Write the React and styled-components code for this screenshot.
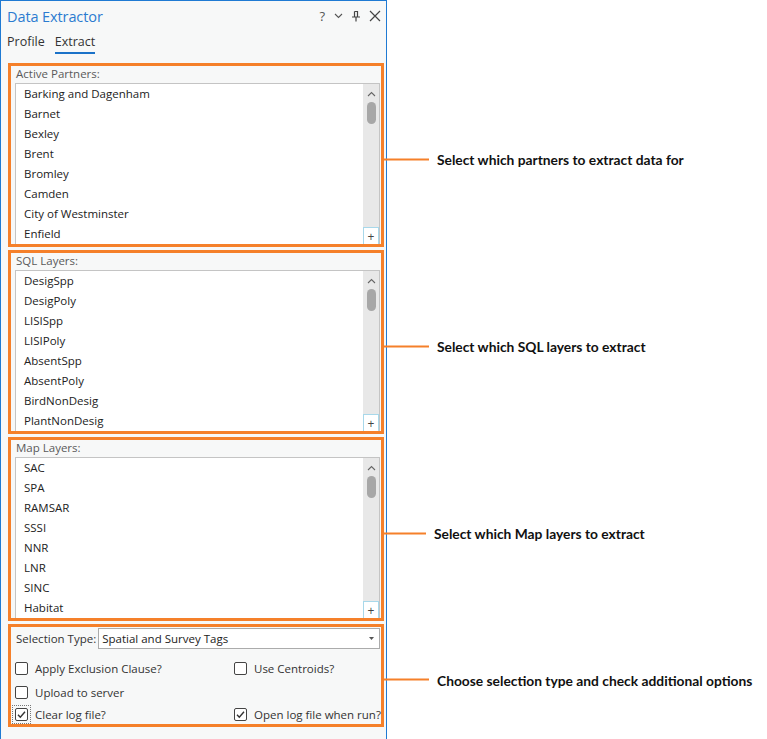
import React from "react";
import styled, { createGlobalStyle } from "styled-components";

const GlobalStyle = createGlobalStyle`
  html, body {
    margin: 0;
    padding: 0;
    background: #fff;
  }
  body {
    font-family: "Open Sans", "Noto Sans", sans-serif;
    color: #222;
  }
`;

const partners = [
  "Barking and Dagenham",
  "Barnet",
  "Bexley",
  "Brent",
  "Bromley",
  "Camden",
  "City of Westminster",
  "Enfield",
];

const sqlLayers = [
  "DesigSpp",
  "DesigPoly",
  "LISISpp",
  "LISIPoly",
  "AbsentSpp",
  "AbsentPoly",
  "BirdNonDesig",
  "PlantNonDesig",
];

const mapLayers = ["SAC", "SPA", "RAMSAR", "SSSI", "NNR", "LNR", "SINC", "Habitat"];

const ListBox = ({ items }) => (
  <List>
    <Items>
      {items.map((item) => (
        <Item key={item}>{item}</Item>
      ))}
    </Items>
    <Track>
      <svg width="9" height="6" viewBox="0 0 9 6" style={{ marginTop: 7 }}>
        <path d="M1 5 L4.5 1.5 L8 5" fill="none" stroke="#666" strokeWidth="1.1" />
      </svg>
      <Thumb />
      <Corner>+</Corner>
    </Track>
  </List>
);

const Check = ({ checked, focused, label }) => (
  <CheckRow>
    <Focus focused={focused}>
      <Box>
        {checked && (
          <svg width="11" height="11" viewBox="0 0 11 11">
            <path d="M2 5.8 L4.3 8.2 L9 2.8" fill="none" stroke="#333" strokeWidth="1.4" />
          </svg>
        )}
      </Box>
    </Focus>
    <span>{label}</span>
  </CheckRow>
);

const App = () => {
  return (
    <>
      <GlobalStyle />
      <Page>
        <Panel>
          <TitleBar>
            <Title>Data Extractor</Title>
            <Tools>
              <Help>?</Help>
              <svg width="9" height="6" viewBox="0 0 9 6">
                <path d="M1 1 L4.5 4.5 L8 1" fill="none" stroke="#555" strokeWidth="1.1" />
              </svg>
              <svg width="10" height="11" viewBox="0 0 10 11">
                <path d="M3.5 0.5 H6.5 V6 M3.5 0.5 V6 M1 6 H9 M5 6 V10.5" fill="none" stroke="#444" strokeWidth="1.2" />
              </svg>
              <svg width="12" height="12" viewBox="0 0 12 12">
                <path d="M1 1 L11 11 M11 1 L1 11" fill="none" stroke="#444" strokeWidth="1.2" />
              </svg>
            </Tools>
          </TitleBar>
          <Tabs>
            <Tab>Profile</Tab>
            <Tab active>Extract</Tab>
          </Tabs>

          <Sections>
            <Section>
              <Label>Active Partners:</Label>
              <ListBox items={partners} />
              <Note>
                <Line />
                <NoteText>Select which partners to extract data for</NoteText>
              </Note>
            </Section>

            <Section>
              <Label>SQL Layers:</Label>
              <ListBox items={sqlLayers} />
              <Note>
                <Line />
                <NoteText>Select which SQL layers to extract</NoteText>
              </Note>
            </Section>

            <Section>
              <Label>Map Layers:</Label>
              <ListBox items={mapLayers} />
              <Note>
                <Line width={45} />
                <NoteText>Select which Map layers to extract</NoteText>
              </Note>
            </Section>

            <Section options>
              <SelectRow>
                <span>Selection Type:</span>
                <Combo>
                  <span>Spatial and Survey Tags</span>
                  <svg width="5" height="3" viewBox="0 0 5 3">
                    <path d="M0 0 H5 L2.5 3 Z" fill="#555" />
                  </svg>
                </Combo>
              </SelectRow>
              <Options>
                <Check label="Apply Exclusion Clause?" />
                <Check label="Use Centroids?" />
                <Check label="Upload to server" />
                <span />
                <Check label="Clear log file?" checked focused />
                <Check label="Open log file when run?" checked />
              </Options>
              <Note>
                <Line />
                <NoteText>Choose selection type and check additional options</NoteText>
              </Note>
            </Section>
          </Sections>
        </Panel>
      </Page>
    </>
  );
};

export default App;

const Page = styled.div`
  display: flex;
  width: 767px;
  height: 739px;
  overflow: hidden;
  background: #fff;
`;

const Panel = styled.div`
  width: 387px;
  height: 739px;
  box-sizing: border-box;
  background: #f7f8f8;
  border: 1px solid #1f7ad3;
  border-bottom: none;
  position: relative;
`;

const TitleBar = styled.div`
  display: flex;
  align-items: center;
  justify-content: space-between;
  height: 30px;
  padding: 0 5px 0 6px;
`;

const Title = styled.div`
  font-size: 14.5px;
  color: #2b7bd0;
  letter-spacing: -0.1px;
`;

const Tools = styled.div`
  display: flex;
  align-items: center;
  gap: 8px;
`;

const Help = styled.span`
  font-size: 13px;
  color: #555;
  margin-right: 1px;
`;

const Tabs = styled.div`
  display: flex;
  gap: 10px;
  height: 23px;
  padding: 0 0 0 6px;
  margin-bottom: 9px;
`;

const Tab = styled.div`
  font-size: 12.5px;
  color: #333;
  line-height: 22px;
  height: 21px;
  border-bottom: 2px solid ${(p) => (p.active ? "#1b72c8" : "transparent")};
`;

const Sections = styled.div`
  display: flex;
  flex-direction: column;
  gap: 3px;
  padding: 0 2px 0 7px;
`;

const Section = styled.div`
  position: relative;
  height: ${(p) => (p.options ? 103 : 184)}px;
  box-sizing: border-box;
  border: 3px solid #f5802a;
  padding: ${(p) => (p.options ? "1px 1px 0 4px" : "0 1px 0 4px")};
  display: flex;
  flex-direction: column;
`;

const Label = styled.div`
  height: 17px;
  line-height: 16px;
  font-size: 11.5px;
  color: #5a5a5a;
  padding-left: 1px;
`;

const List = styled.div`
  height: 161px;
  box-sizing: border-box;
  display: flex;
  background: #fff;
  border: 1px solid #c4c4c4;
  border-bottom: none;
`;

const Items = styled.div`
  flex: 1;
  padding-left: 8px;
`;

const Item = styled.div`
  height: 20px;
  line-height: 20px;
  font-size: 11.5px;
  color: #222;
  white-space: nowrap;
`;

const Track = styled.div`
  width: 16px;
  background: #e8e8e8;
  display: flex;
  flex-direction: column;
  align-items: center;
`;

const Thumb = styled.div`
  width: 9px;
  height: 22px;
  margin-top: 5px;
  border-radius: 5px;
  background: #a7a7a7;
`;

const Corner = styled.div`
  margin-top: auto;
  width: 16px;
  height: 17px;
  box-sizing: border-box;
  border: 1px solid #a8d8ea;
  border-bottom: none;
  background: #fff;
  display: flex;
  align-items: center;
  justify-content: center;
  font-size: 12px;
  color: #444;
  line-height: 1;
  padding-top: 1px;
`;

const SelectRow = styled.div`
  display: flex;
  align-items: center;
  gap: 2px;
  height: 21px;
  font-size: 11.5px;
  color: #333;
  padding-left: 1px;
`;

const Combo = styled.div`
  flex: 1;
  height: 21px;
  box-sizing: border-box;
  border: 1px solid #ababab;
  background: #fff;
  display: flex;
  align-items: center;
  justify-content: space-between;
  padding: 0 5px 0 3px;
  font-size: 11.5px;
  color: #222;
`;

const Options = styled.div`
  display: grid;
  grid-template-columns: 219px 1fr;
  grid-template-rows: 24px 24px 21px;
  align-items: center;
  margin-top: 7px;
`;

const CheckRow = styled.div`
  display: flex;
  align-items: center;
  gap: 7px;
  font-size: 11.5px;
  color: #333;
  white-space: nowrap;
`;

const Focus = styled.div`
  margin: -3px;
  padding: 2px;
  border: 1px dotted ${(p) => (p.focused ? "#777" : "transparent")};
  display: flex;
`;

const Box = styled.div`
  width: 13px;
  height: 13px;
  box-sizing: border-box;
  border: 1px solid #444;
  border-radius: 2px;
  background: #fff;
  display: flex;
  align-items: center;
  justify-content: center;
`;

const Note = styled.div`
  position: absolute;
  left: 100%;
  top: calc(50% + 4px);
  transform: translateY(-50%);
  display: flex;
  align-items: center;
  gap: 8px;
  z-index: 2;
`;

const Line = styled.div`
  width: ${(p) => p.width || 48}px;
  height: 2px;
  background: #f5802a;
`;

const NoteText = styled.div`
  font-family: Lato, "Open Sans", sans-serif;
  font-weight: 700;
  font-size: 13.8px;
  color: #111;
  white-space: nowrap;
`;
